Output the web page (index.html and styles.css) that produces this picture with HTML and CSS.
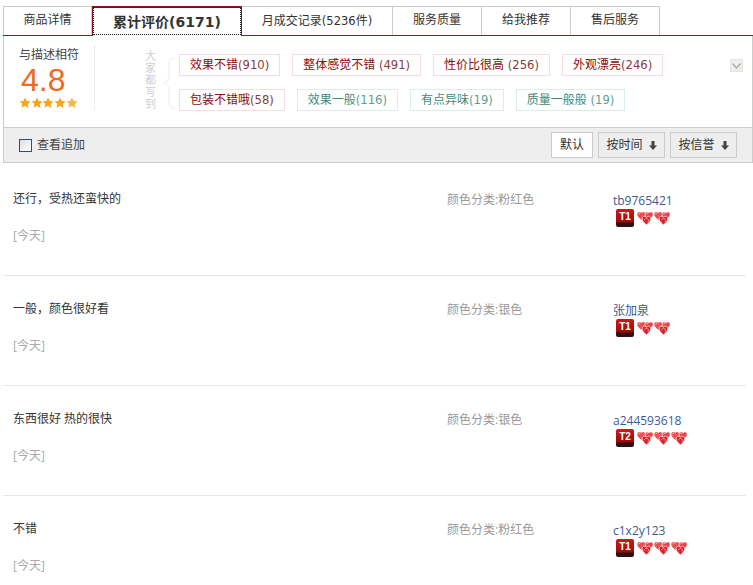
FILE: index.html
```html
<!DOCTYPE html>
<html lang="zh">
<head>
<meta charset="utf-8">
<title>累计评价</title>
<link rel="stylesheet" href="styles.css">
</head>
<body>
<svg class="defs" width="0" height="0" aria-hidden="true">
  <symbol id="heart" viewBox="0 0 18 15">
    <path d="M4.500 1.800C3.400-.1.300.4.300 3.200c0 2.200 2.300 3.700 4.200 5.800 1.900-2.100 4.200-3.600 4.200-5.800 0-2.800-3.100-3.300-4.200-1.400z" fill="#ec5054"/>
    <path d="M12.800 1.800c-1.100-1.900-4.200-1.400-4.200 1.400 0 2.200 2.300 3.700 4.200 5.800 1.900-2.100 4.200-3.600 4.200-5.800 0-2.800-3.100-3.300-4.200-1.400z" fill="#e8444a" stroke="#fff" stroke-width=".5"/>
    <path d="M10 6.300C8.800 4.200 5.400 4.800 5.400 7.900c0 2.500 2.500 4 4.600 6.600 2.100-2.600 4.600-4.100 4.600-6.600 0-3.100-3.400-3.700-4.600-1.600z" fill="#d8232c" stroke="#fff" stroke-width=".7"/>
    <path d="M1.700 3c.2-.8.800-1.200 1.600-1.100M10 3c.2-.8.800-1.200 1.600-1.100" fill="none" stroke="#fdd" stroke-width=".9"/>
    <path d="M8.200 9.500a2 2 0 1 1 3.300 1.300" fill="none" stroke="#f9b4b4" stroke-width=".8"/>
  </symbol>
  <symbol id="star" viewBox="0 0 12 12">
    <path d="M6 .5l1.700 3.600 3.900.5-2.900 2.700.8 3.900L6 8.800l-3.500 1.900.8-3.900L.4 4.600l3.900-.5z"/>
  </symbol>
</svg>
<main class="page">
  <nav class="tabs">
    <a class="tab tab-1">商品详情</a>
    <a class="tab tab-active">累计评价<b class="count">(6171)</b></a>
    <a class="tab tab-3">月成交记录<span class="num">(5236</span>件<span class="num">)</span></a>
    <a class="tab tab-4">服务质量</a>
    <a class="tab tab-4">给我推荐</a>
    <a class="tab tab-4">售后服务</a>
  </nav>
  <section class="summary">
    <div class="score">
      <div class="score-label">与描述相符</div>
      <div class="score-value">4.8</div>
      <div class="stars">
        <svg class="star"><use href="#star"/></svg><svg class="star"><use href="#star"/></svg><svg class="star"><use href="#star"/></svg><svg class="star"><use href="#star"/></svg><svg class="star star-part"><use href="#star"/></svg>
      </div>
    </div>
    <div class="everyone">大家都写到</div>
    <svg class="brace" width="14" height="52" viewBox="0 0 14 52"><path d="M13 1C8 1 7 3 7 8v11c0 4-2 6-5 7 3 1 5 3 5 7v11c0 5 1 7 6 7" fill="none" stroke="#f3f3f3" stroke-width="1.500"/></svg>
    <div class="tags">
      <div class="tag-row">
        <span class="tag pos">效果不错<i>(910)</i></span>
        <span class="tag pos">整体感觉不错<i> (491)</i></span>
        <span class="tag pos">性价比很高<i> (256)</i></span>
        <span class="tag pos">外观漂亮<i>(246)</i></span>
      </div>
      <div class="tag-row">
        <span class="tag pos">包装不错哦<i>(58)</i></span>
        <span class="tag neu">效果一般<i>(116)</i></span>
        <span class="tag neu">有点异味<i>(19)</i></span>
        <span class="tag neu">质量一般般<i> (19)</i></span>
      </div>
    </div>
    <span class="expand"><svg width="9" height="6" viewBox="0 0 9 6"><path d="M.5.500 4.500 5 8.500.500" fill="none" stroke="#aaa" stroke-width="1.200"/></svg></span>
  </section>
  <section class="toolbar">
    <label class="check"><span class="box"></span>查看追加</label>
    <div class="sorts">
      <button class="sort sort-on">默认</button>
      <button class="sort">按时间<svg width="8" height="9" viewBox="0 0 8 9"><path d="M2.500 0h3v4.500H8L4 9 0 4.500h2.500z" fill="#444"/></svg></button>
      <button class="sort">按信誉<svg width="8" height="9" viewBox="0 0 8 9"><path d="M2.500 0h3v4.500H8L4 9 0 4.500h2.500z" fill="#444"/></svg></button>
    </div>
  </section>
  <section class="reviews">
    <article class="review">
      <div class="body"><p class="text">还行，受热还蛮快的</p><p class="date">[今天]</p></div>
      <div class="sku">颜色分类:粉红色</div>
      <div class="user"><a class="name">tb9765421</a>
        <div class="ranks"><span class="badge">T1</span><svg class="hrt"><use href="#heart"/></svg><svg class="hrt"><use href="#heart"/></svg></div>
      </div>
    </article>
    <article class="review">
      <div class="body"><p class="text">一般，颜色很好看</p><p class="date">[今天]</p></div>
      <div class="sku">颜色分类:银色</div>
      <div class="user"><a class="name">张加泉</a>
        <div class="ranks"><span class="badge">T1</span><svg class="hrt"><use href="#heart"/></svg><svg class="hrt"><use href="#heart"/></svg></div>
      </div>
    </article>
    <article class="review">
      <div class="body"><p class="text">东西很好 热的很快</p><p class="date">[今天]</p></div>
      <div class="sku">颜色分类:银色</div>
      <div class="user"><a class="name">a244593618</a>
        <div class="ranks"><span class="badge">T2</span><svg class="hrt"><use href="#heart"/></svg><svg class="hrt"><use href="#heart"/></svg><svg class="hrt"><use href="#heart"/></svg></div>
      </div>
    </article>
    <article class="review">
      <div class="body"><p class="text">不错</p><p class="date">[今天]</p></div>
      <div class="sku">颜色分类:粉红色</div>
      <div class="user"><a class="name">c1x2y123</a>
        <div class="ranks"><span class="badge">T1</span><svg class="hrt"><use href="#heart"/></svg><svg class="hrt"><use href="#heart"/></svg><svg class="hrt"><use href="#heart"/></svg></div>
      </div>
    </article>
  </section>
</main>
</body>
</html>
```
FILE: styles.css
```css
* { box-sizing: border-box; }
html, body { margin: 0; padding: 0; background: #fff; height: 585px; overflow: hidden; }
body { font: 12px/18px "Open Sans", "Noto Sans CJK SC", sans-serif; color: #333; }
.defs { position: absolute; }
p { margin: 0; }
.page { padding-left: 3px; }

.tabs { display: flex; height: 36px; padding-top: 6px; border-bottom: 1px solid #8c1a1a; }
.tab { display: flex; align-items: center; justify-content: center; height: 29px; padding-bottom: 2px; border: 1px solid #ccc; border-left: 0; border-bottom: 0; color: #333; }
.tab-1 { width: 89px; border-left: 1px solid #ccc; }
.tab-3 { width: 151px; padding-bottom: 0; }
.tab-4 { width: 89px; }
.tab-active { width: 150px; height: 30px; padding-bottom: 0; border: 1px solid #8c1a1a; border-top: 2px solid #8c1a1a; border-bottom: 0; background: #fff; font-size: 14px; font-weight: 700; outline: 1px dotted #222; outline-offset: -2px; }
.count { font-family: "DejaVu Sans", sans-serif; font-size: 14px; }
.num { font-family: "DejaVu Sans", sans-serif; font-size: 11.500px; }

.summary { display: flex; height: 91px; padding: 10px 0 0 15px; border-right: 1px solid #ccc; border-left: 1px solid #ccc; }
.score { width: 76px; height: 64px; border-right: 1px dotted #ddd; }
.score-label { line-height: 14px; padding-top: 2px; color: #444; }
.score-value { margin-top: 4px; padding-left: 2px; font: 32px/29px "Liberation Sans", sans-serif; color: #ee6a1e; }
.stars { display: flex; margin-top: 2px; }
.star { width: 12px; height: 12px; margin-right: -.300px; fill: #f9a61a; flex: none; }
.star-part { fill: #f7b548; }
.everyone { width: 12px; height: 60px; margin: 4px 0 0 50px; font-size: 11px; line-height: 12px; color: #d0d0d0; }
.brace { margin: 11px 0 0 5px; }
.tags { display: flex; flex-direction: column; gap: 13px; margin: 8px 0 0 3px; }
.tag-row { display: flex; gap: 12px; }
.tag { display: block; height: 22px; line-height: 20px; padding: 0 10px; border: 1px solid; white-space: pre; }
.tag i { font: 11.600px/20px "DejaVu Sans", sans-serif; }
.pos { border-color: #f7dede; color: #8a0c0c; }
.pos i { color: #8a3a3a; }
.neu { border-color: #d8efea; color: #3f8a7c; }
.neu i { color: #5f9c90; }
.expand { display: flex; align-items: center; justify-content: center; width: 13px; height: 13px; margin: 13px 9px 0 auto; background: #eeeeea; border: 1px solid #e4e4e0; }

.toolbar { display: flex; align-items: center; justify-content: space-between; height: 36px; background: #eeeeee; border: 1px solid #ccc; padding: 0 15px; }
.check { display: flex; align-items: center; gap: 5px; color: #444; }
.box { width: 13px; height: 13px; border: 1px solid #2a5078; background: linear-gradient(135deg, #dcdcdc, #fff); }
.sorts { display: flex; gap: 5px; }
.sort { display: flex; align-items: center; justify-content: center; gap: 6px; width: 67px; height: 26px; padding: 0; font: inherit; color: #333; background: #eee; border: 1px solid #ccc; }
.sort-on { width: 42px; background: #fff; }

.reviews { padding-top: 3px; }
.review { display: flex; height: 110px; margin-right: 7px; border-bottom: 1px solid #e8e8e8; padding-top: 24px; }
.body { width: 444px; padding-left: 10px; }
.date { color: #aaa; margin-top: 19px; }
.sku { width: 166px; color: #999; margin-top: 1px; }
.user { margin-top: 2px; }
.name { display: block; color: #3d5a94; line-height: 18px; }
.ranks { display: flex; align-items: center; padding-left: 3px; margin-top: -1px; }
.badge { display: block; width: 18px; height: 18px; margin-right: 3px; border-radius: 2px; background: linear-gradient(#d01818, #9c0a0a 74%, #301010 76%); color: #fff; font: 700 10px/15px "Liberation Sans", sans-serif; text-align: center; }
.hrt { width: 17px; height: 15px; }
```
